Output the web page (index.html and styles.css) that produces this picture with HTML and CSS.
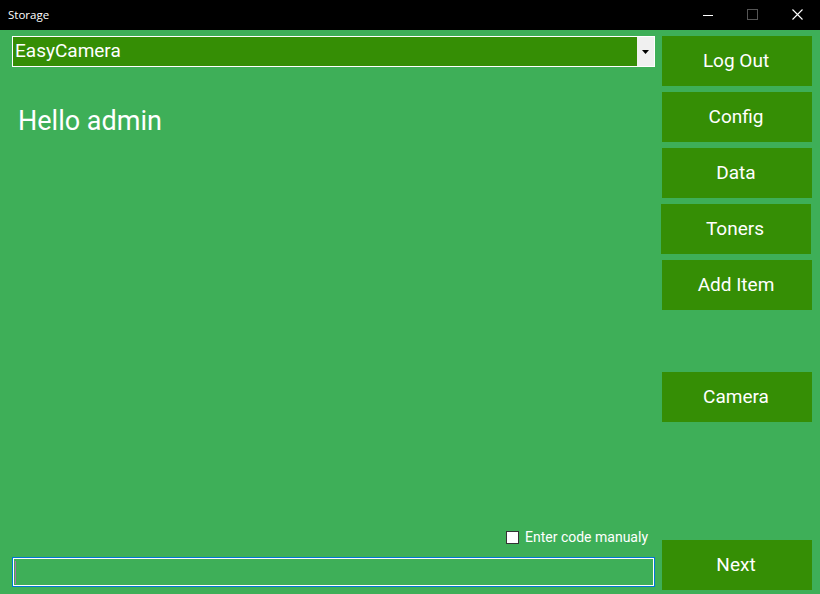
FILE: index.html
```html
<!DOCTYPE html>
<html>
<head>
<meta charset="utf-8">
<link rel="stylesheet" href="styles.css">
</head>
<body>
<div class="window">
  <div class="titlebar">
    <span class="title">Storage</span>
    <div class="controls">
      <span class="ctl"><svg width="10" height="10" viewBox="0 0 10 10"><line x1="0" y1="5.5" x2="10" y2="5.5" stroke="#fff" stroke-width="1"/></svg></span>
      <span class="ctl"><svg width="11" height="11" viewBox="0 0 11 11"><rect x="0.5" y="0.5" width="10" height="10" fill="none" stroke="#555" stroke-width="1"/></svg></span>
      <span class="ctl"><svg width="11" height="11" viewBox="0 0 11 11"><path d="M0.5 0.5 L10.5 10.5 M10.5 0.5 L0.5 10.5" stroke="#fff" stroke-width="1.1"/></svg></span>
    </div>
  </div>
  <div class="main">
    <div class="left">
      <div class="combo">
        <span class="combo-text">EasyCamera</span>
        <span class="combo-btn"><svg width="7" height="4" viewBox="0 0 7 4"><path d="M0 0 H7 L3.5 4 Z" fill="#000"/></svg></span>
      </div>
      <div class="greeting">Hello admin</div>
      <div class="spacer"></div>
      <label class="check-row"><span class="checkbox"></span><span class="check-label">Enter code manualy</span></label>
      <div class="textbox"><span class="caret"></span></div>
    </div>
    <div class="right">
      <div class="btn">Log Out</div>
      <div class="btn">Config</div>
      <div class="btn">Data</div>
      <div class="btn shift">Toners</div>
      <div class="btn">Add Item</div>
      <div class="btn gap-top">Camera</div>
      <div class="spacer"></div>
      <div class="btn next">Next</div>
    </div>
  </div>
</div>
</body>
</html>
```

FILE: styles.css
```css
html, body {
  margin: 0;
  padding: 0;
}
body {
  width: 820px;
  height: 594px;
  overflow: hidden;
  background: #3eaf58;
  font-family: Roboto, "Liberation Sans", sans-serif;
}
.window {
  display: flex;
  flex-direction: column;
  height: 594px;
}
.titlebar {
  height: 30px;
  background: #000;
  display: flex;
  align-items: center;
  justify-content: space-between;
  flex: none;
}
.title {
  color: #fff;
  font-family: "Open Sans", "Noto Sans", sans-serif;
  font-size: 11.5px;
  margin-left: 8px;
  margin-top: -1px;
}
.controls {
  display: flex;
  height: 30px;
}
.ctl {
  width: 45px;
  height: 30px;
  display: flex;
  align-items: center;
  justify-content: center;
}
.ctl svg { display: block; margin-top: -1px; }
.ctl:first-child svg { margin-top: 0; }

.main {
  flex: 1;
  display: flex;
  padding: 6px 0 0 12px;
  gap: 7px;
}
.left {
  width: 643px;
  display: flex;
  flex-direction: column;
  padding-bottom: 7px;
}
.combo {
  height: 31px;
  box-sizing: border-box;
  border: 1px solid #fff;
  background: #358e05;
  display: flex;
  align-items: stretch;
}
.combo-text {
  flex: 1;
  color: #fff;
  font-size: 19px;
  line-height: 27px;
  padding-left: 2px;
}
.combo-btn {
  width: 17px;
  background: #f0f0f0;
  display: flex;
  align-items: center;
  justify-content: center;
}
.combo-btn svg { display: block; margin-top: 1px; }
.greeting {
  color: #fff;
  font-size: 27px;
  margin-top: 37px;
  margin-left: 6px;
  line-height: 34px;
}
.spacer { flex: 1; }
.check-row {
  display: flex;
  align-items: center;
  justify-content: flex-end;
  gap: 6px;
  padding-right: 7px;
  margin-bottom: 12px;
}
.checkbox {
  width: 13px;
  height: 13px;
  box-sizing: border-box;
  background: #fff;
  border: 1px solid #333;
}
.check-label {
  color: #fff;
  font-size: 14px;
  line-height: 16px;
}
.textbox {
  height: 30px;
  box-sizing: border-box;
  border: 1px solid #0078d7;
  box-shadow: inset 0 0 0 1px #fff;
  display: flex;
  align-items: center;
  padding-left: 2px;
}
.caret {
  width: 1px;
  height: 23px;
  background: #b06fa8;
}
.right {
  width: 150px;
  display: flex;
  flex-direction: column;
  gap: 6px;
  padding-bottom: 4px;
}
.btn {
  height: 50px;
  box-sizing: border-box;
  flex: none;
  background: #358e05;
  color: #fff;
  font-size: 19px;
  display: flex;
  align-items: center;
  justify-content: center;
  padding: 0 2px 2px 0;
}
.btn.shift {
  margin-left: -1px;
  margin-right: 1px;
}
.btn.gap-top {
  margin-top: 56px;
}
.right .spacer { flex: 1; }
```
